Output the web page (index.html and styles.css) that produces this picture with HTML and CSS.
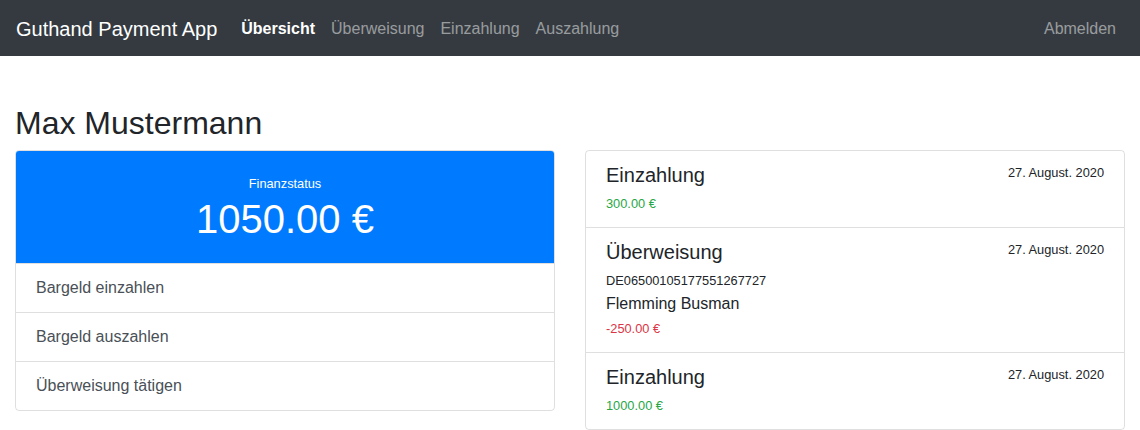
FILE: index.html
```html
<!DOCTYPE html>
<html lang="de">
<head>
<meta charset="utf-8">
<title>Guthand Payment App</title>
<link rel="stylesheet" href="styles.css">
</head>
<body>
<nav class="navbar">
  <a class="brand" href="#">Guthand Payment App</a>
  <ul class="nav">
    <li><a class="nav-link active" href="#">Übersicht</a></li>
    <li><a class="nav-link" href="#">Überweisung</a></li>
    <li><a class="nav-link" href="#">Einzahlung</a></li>
    <li><a class="nav-link" href="#">Auszahlung</a></li>
  </ul>
  <a class="nav-link logout" href="#">Abmelden</a>
</nav>
<main class="container">
  <h1 class="title">Max Mustermann</h1>
  <div class="row">
    <div class="col">
      <div class="card">
        <div class="status">
          <div><small>Finanzstatus</small></div>
          <h1 class="balance">1050.00 €</h1>
        </div>
        <a class="action" href="#">Bargeld einzahlen</a>
        <a class="action" href="#">Bargeld auszahlen</a>
        <a class="action" href="#">Überweisung tätigen</a>
      </div>
    </div>
    <div class="col">
      <div class="card">
        <div class="tx">
          <div class="tx-head">
            <h5 class="tx-title">Einzahlung</h5>
            <small>27. August. 2020</small>
          </div>
          <small class="plus">300.00 €</small>
        </div>
        <div class="tx">
          <div class="tx-head">
            <h5 class="tx-title">Überweisung</h5>
            <small>27. August. 2020</small>
          </div>
          <div><small>DE06500105177551267727</small></div>
          <div>Flemming Busman</div>
          <small class="minus">-250.00 €</small>
        </div>
        <div class="tx">
          <div class="tx-head">
            <h5 class="tx-title">Einzahlung</h5>
            <small>27. August. 2020</small>
          </div>
          <small class="plus">1000.00 €</small>
        </div>
      </div>
    </div>
  </div>
</main>
</body>
</html>
```
FILE: styles.css
```css
* { box-sizing: border-box; }
html, body { margin: 0; }
body {
  font-family: "Liberation Sans", Arial, sans-serif;
  font-size: 16px;
  line-height: 1.5;
  color: #212529;
  background: #fff;
}
a { text-decoration: none; }
small { font-size: 80%; }

.navbar {
  display: flex;
  align-items: center;
  height: 56px;
  padding: 8px 16px;
  background: #343a40;
}
.brand {
  font-size: 20px;
  line-height: 30px;
  color: #fff;
  margin-right: 16px;
  padding: 6px 0 4px;
}
.nav {
  display: flex;
  list-style: none;
  margin: 0;
  padding: 0;
  flex: 1;
}
.nav-link {
  display: block;
  padding: 9px 8px 7px;
  color: rgba(255,255,255,.5);
}
.nav-link.active { color: #fff; font-weight: bold; }

.container {
  padding: 0 15px;
}
.title {
  font-size: 32px;
  font-weight: 500;
  line-height: 1.2;
  margin: 48px 0 8px;
}
.row {
  display: flex;
  margin: 0 -15px;
}
.col {
  flex: 1 1 0;
  padding: 0 15px;
}
.card {
  border: 1px solid rgba(0,0,0,.125);
  border-radius: 4px;
  overflow: hidden;
}
.status {
  background: #007bff;
  color: #fff;
  text-align: center;
  padding: 20px;
}
.balance {
  font-size: 40px;
  font-weight: 500;
  line-height: 1.2;
  margin: 0;
}
.action {
  display: block;
  padding: 12px 20px;
  color: #495057;
  border-top: 1px solid rgba(0,0,0,.125);
}
.tx {
  padding: 12px 20px;
}
.tx + .tx { border-top: 1px solid rgba(0,0,0,.125); }
.tx-head {
  display: flex;
  justify-content: space-between;
  align-items: flex-start;
}
.tx-title {
  font-size: 20px;
  font-weight: 500;
  line-height: 1.2;
  margin: 0 0 4px;
}
.plus { color: #28a745; }
.minus { color: #dc3545; }
```
